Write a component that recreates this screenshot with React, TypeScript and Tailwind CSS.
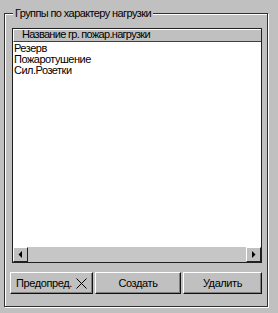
import React from "react";

const items = ["Резерв", "Пожаротушение", "Сил.Розетки"];

function Btn({ w, children }: { w: string; children: React.ReactNode }) {
  return (
    <button
      className={`${w} h-[22px] flex items-center justify-center bg-[#c0c0c0] text-[11px] tracking-[-0.4px] text-black border-t border-l border-t-white border-l-white border-r border-b border-r-[#101010] border-b-[#101010] shadow-[inset_-1px_-1px_0_#808080]`}
    >
      {children}
    </button>
  );
}

function Arrow({ dir }: { dir: "left" | "right" }) {
  return (
    <div className="w-[15px] h-full flex items-center justify-center bg-[#c0c0c0] border-t border-l border-t-white border-l-white border-r border-b border-r-[#202020] border-b-[#202020]">
      <svg width="6" height="7" viewBox="0 0 6 7">
        {dir === "left" ? <path d="M4 0 L4 7 L0.5 3.5 Z" fill="#000" /> : <path d="M1 0 L1 7 L4.5 3.5 Z" fill="#000" />}
      </svg>
    </div>
  );
}

export default function App() {
  return (
    <div
      className="w-[278px] h-[313px] bg-[#c0c0c0] pt-[13px] pl-[4px]"
      style={{ fontFamily: '"Liberation Sans", Arial, sans-serif' }}
    >
      {/* group box */}
      <div className="relative w-[264px] h-[294px] border border-[#303030] shadow-[1px_1px_0_#fff,inset_1px_1px_0_#fff] flex flex-col">
        <span className="absolute -top-[7px] left-[8px] px-[2px] bg-[#c0c0c0] text-[11px] leading-[12px] tracking-[-0.6px] text-black">
          Группы по характеру нагрузки
        </span>

        {/* list */}
        <div className="mt-[14px] ml-[7px] w-[250px] h-[235px] border border-[#202020] bg-white flex flex-col">
          <div className="h-[13px] overflow-hidden bg-[#c0c0c0] border-t border-l border-t-white border-l-white border-b border-b-[#404040] pl-[8px] text-[11px] leading-[8px] tracking-[-0.7px] text-black">
            Название гр. пожар.нагрузки
          </div>
          <div className="flex-1 pl-[1px] pt-[1px] text-[11px] leading-[11px] tracking-[-0.5px] text-black">
            {items.map((t) => (
              <div key={t}>{t}</div>
            ))}
          </div>
          <div className="h-[15px] flex bg-[#c8c8c8]">
            <Arrow dir="left" />
            <div className="flex-1 bg-[#c6c6c6]" />
            <Arrow dir="right" />
          </div>
        </div>

        {/* buttons */}
        <div className="mt-[9px] ml-[5px] flex gap-[2px]">
          <Btn w="w-[83px]">
            <span className="flex items-center gap-[4px]">
              Предопред.
              <svg width="11" height="11" viewBox="0 0 11 11">
                <path d="M0.5 0.5 L10.5 10.5 M10.5 0.5 L0.5 10.5" stroke="#000" strokeWidth="1" />
              </svg>
            </span>
          </Btn>
          <Btn w="w-[86px]">Создать</Btn>
          <Btn w="w-[79px]">Удалить</Btn>
        </div>
      </div>
    </div>
  );
}
